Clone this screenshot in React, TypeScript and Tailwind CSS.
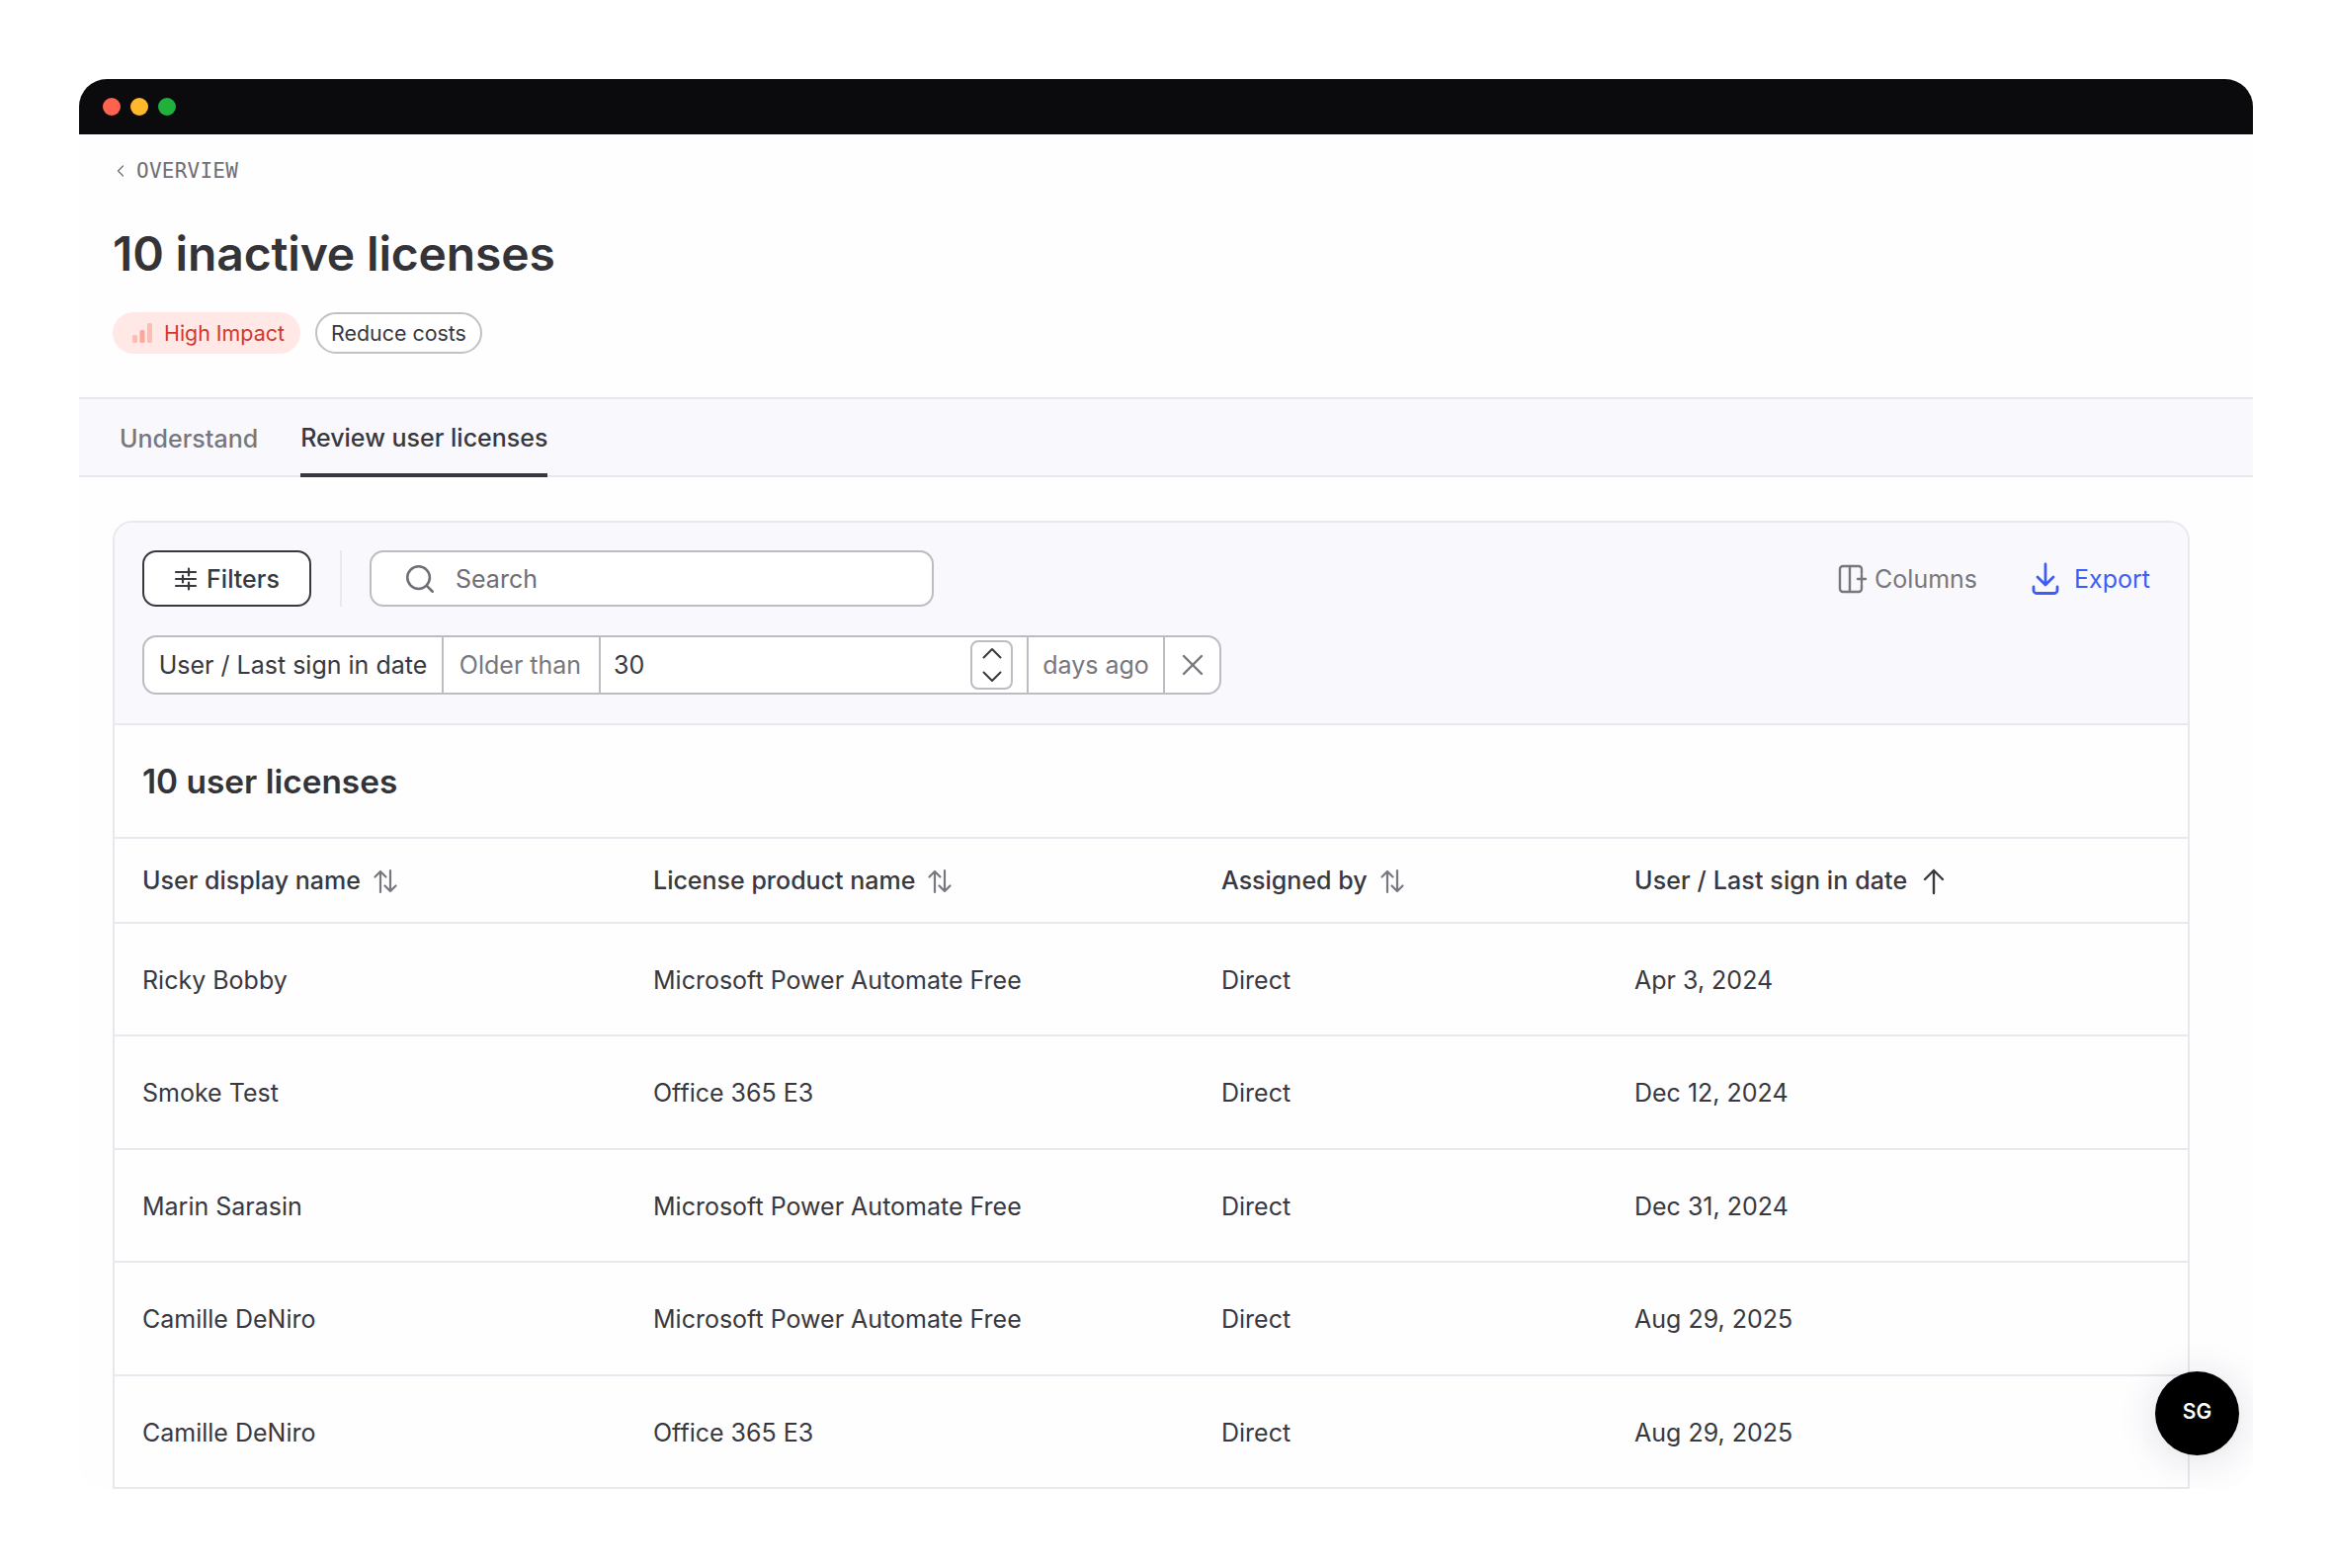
import { ChevronLeft, Search, X } from "lucide-react"

const rows = [
  { id: 1, name: "Ricky Bobby", product: "Microsoft Power Automate Free", assigned: "Direct", date: "Apr 3, 2024" },
  { id: 2, name: "Smoke Test", product: "Office 365 E3", assigned: "Direct", date: "Dec 12, 2024" },
  { id: 3, name: "Marin Sarasin", product: "Microsoft Power Automate Free", assigned: "Direct", date: "Dec 31, 2024" },
  { id: 4, name: "Camille DeNiro", product: "Microsoft Power Automate Free", assigned: "Direct", date: "Aug 29, 2025" },
  { id: 5, name: "Camille DeNiro", product: "Office 365 E3", assigned: "Direct", date: "Aug 29, 2025" },
]

const gridCols = "grid grid-cols-[517px_575px_418px_1fr] pl-[28px]"

function SortIcon() {
  return (
    <svg width="28" height="28" viewBox="0 0 28 28" fill="none" stroke="#77777d" strokeWidth="2.2" strokeLinecap="round" strokeLinejoin="round">
      <path d="M9 25V4M3.500 9.500 9 4l5.500 5.500" />
      <path d="M19 3v21M13.500 18.500 19 24l5.500-5.500" />
    </svg>
  )
}

function ArrowUpIcon() {
  return (
    <svg width="26" height="28" viewBox="0 0 26 28" fill="none" stroke="#38383e" strokeWidth="2.4" strokeLinecap="round" strokeLinejoin="round">
      <path d="M13 26V3M4 12l9-9 9 9" />
    </svg>
  )
}

function FilterIcon() {
  return (
    <svg width="24" height="24" viewBox="0 0 24 24" fill="none" stroke="#38383e" strokeWidth="2.2" strokeLinecap="round">
      <path d="M2 5h20M2 12h20M2 19h20" />
      <path d="M15 1.500v7M9 8.500v7M15 15.500v7" />
    </svg>
  )
}

function ColumnsIcon() {
  return (
    <svg width="30" height="30" viewBox="0 0 30 30" fill="none" stroke="#77777d" strokeWidth="2.400" strokeLinecap="round">
      <path d="M24 9V5a3 3 0 0 0-3-3H5a3 3 0 0 0-3 3v20a3 3 0 0 0 3 3h16a3 3 0 0 0 3-3v-4" />
      <path d="M12 2v26" />
      <path d="M24 11v8M20 15h8" />
    </svg>
  )
}

function ExportIcon() {
  return (
    <svg width="28" height="34" viewBox="0 0 28 34" fill="none" stroke="#3f5cf5" strokeWidth="2.800" strokeLinecap="round" strokeLinejoin="round">
      <path d="M14 2v21M6 15l8 8 8-8" />
      <path d="M2 25v3.500a3 3 0 0 0 3 3h18a3 3 0 0 0 3-3V25" />
    </svg>
  )
}

function ImpactIcon() {
  return (
    <svg width="20" height="20" viewBox="0 0 20 20">
      <rect x="0" y="12" width="5" height="8" rx="1.500" fill="#fdbcb4" />
      <rect x="7.500" y="7" width="5" height="13" rx="1.500" fill="#fba79c" />
      <rect x="15" y="0" width="5" height="20" rx="1.500" fill="#fdbcb4" />
    </svg>
  )
}

function StepUp() {
  return (
    <svg width="20" height="12" viewBox="0 0 20 12" fill="none" stroke="#38383e" strokeWidth="2" strokeLinecap="round" strokeLinejoin="round">
      <path d="M1.500 10.500 10 2l8.500 8.500" />
    </svg>
  )
}

function StepDown() {
  return (
    <svg width="20" height="12" viewBox="0 0 20 12" fill="none" stroke="#38383e" strokeWidth="2" strokeLinecap="round" strokeLinejoin="round">
      <path d="M1.500 1.500 10 10l8.500-8.500" />
    </svg>
  )
}

export default function App() {
  return (
    <div className="min-h-[1587px] bg-white px-[80px] pt-[80px] pb-[80px] font-['Inter',sans-serif] text-[#38383e]">
      <div className="relative h-[1427px] overflow-hidden rounded-[28px] bg-[#fefeff]">
        {/* window bar */}
        <div className="flex h-[56px] items-center gap-[10px] bg-[#0b0a0d] pl-[24px]">
          <span className="h-[18px] w-[18px] rounded-full bg-[#ff6350]" />
          <span className="h-[18px] w-[18px] rounded-full bg-[#ffb72b]" />
          <span className="h-[18px] w-[18px] rounded-full bg-[#1fb13c]" />
        </div>

        {/* back link + heading */}
        <div className="flex items-center gap-[6px] pl-[32px] pt-[25px] font-['DejaVu_Sans_Mono',monospace] text-[21px] leading-[24px] tracking-[0.25px] text-[#6e6e74]">
          <ChevronLeft size={20} strokeWidth={1.5} />
          <span>OVERVIEW</span>
        </div>
        <h1 className="pl-[34px] pt-[43px] text-[48px] leading-[58px] font-semibold tracking-[-0.15px] text-[#333338]">10 inactive licenses</h1>
        <div className="flex gap-[15px] pl-[34px] pt-[30px]">
          <span className="flex h-[42px] w-[190px] items-center gap-[12px] rounded-full bg-[#ffe8e6] pl-[20px] text-[21.4px] text-[#d1392d]">
            <ImpactIcon />
            High Impact
          </span>
          <span className="flex h-[42px] w-[169px] items-center justify-center rounded-full border-2 border-[#c0c0c6] bg-white text-[21.4px] text-[#38383e]">
            Reduce costs
          </span>
        </div>

        {/* tabs */}
        <div className="mt-[44px] flex h-[81px] items-stretch gap-[43px] border-y-2 border-[#e8e8ee] bg-[#f9f9fd] pl-[41px] text-[25px] font-medium">
          <span className="flex items-center pt-[4px] text-[#77777d]">Understand</span>
          <span className="-mb-[2px] flex items-center border-b-[4px] border-[#38383e] pt-[4px] text-[#38383e]">Review user licenses</span>
        </div>

        {/* card */}
        <div className="ml-[34px] mr-[64px] mt-[44px] rounded-t-[20px] border-2 border-b-0 border-[#e8e8ee]">
          <div className="h-[205px] rounded-t-[18px] border-b-2 border-[#e8e8ee] bg-[#f9f9fd] pl-[28px] pr-[38px] pt-[28px]">
            <div className="flex h-[57px] items-center">
              <button className="flex h-[57px] w-[171px] items-center justify-center gap-[9px] rounded-[14px] border-2 border-[#38383e] bg-white text-[25px] font-medium">
                <FilterIcon />
                <span className="pt-[2px]">Filters</span>
              </button>
              <div className="ml-[29px] mr-[28px] h-[57px] w-[2px] bg-[#e8e8ee]" />
              <div className="flex h-[57px] w-[571px] items-center gap-[19px] rounded-[14px] border-2 border-[#bcbcc2] bg-white pl-[32px] text-[25px] text-[#6e6e74]">
                <Search size={34} strokeWidth={1.8} />
                <span className="pt-[2px]">Search</span>
              </div>
              <div className="ml-auto flex items-center gap-[55px] text-[25px]">
                <span className="flex items-center gap-[7px] text-[#77777d]">
                  <ColumnsIcon />
                  <span className="pt-[2px]">Columns</span>
                </span>
                <span className="flex items-center gap-[15px] text-[#3f5cf5]">
                  <ExportIcon />
                  <span className="pt-[2px]">Export</span>
                </span>
              </div>
            </div>

            {/* active filter */}
            <div className="mt-[29px] flex h-[60px] w-[1092px] items-stretch overflow-hidden rounded-[14px] border-2 border-[#bcbcc2] bg-white text-[25px]">
              <span className="flex w-[303px] items-center justify-center border-r-2 border-[#bcbcc2] pt-[2px]">User / Last sign in date</span>
              <span className="flex w-[159px] items-center justify-center border-r-2 border-[#bcbcc2] pr-[2px] pt-[2px] text-[#77777d]">Older than</span>
              <span className="flex w-[433px] items-center justify-between border-r-2 border-[#bcbcc2] pl-[13px] pr-[14px]">
                <span className="pt-[2px]">30</span>
                <span className="flex h-[50px] w-[43px] flex-col items-center justify-between rounded-[8px] border-2 border-[#bcbcc2] py-[5px]">
                  <StepUp />
                  <StepDown />
                </span>
              </span>
              <span className="flex w-[138px] items-center justify-center border-r-2 border-[#bcbcc2] pt-[2px] text-[#77777d]">days ago</span>
              <span className="flex flex-1 items-center justify-center text-[#77777d]">
                <X size={36} strokeWidth={1.6} />
              </span>
            </div>
          </div>

          <div className="flex h-[112.500px] items-center pl-[28px] pt-[1px] text-[33.400px] font-semibold text-[#333338]">10 user licenses</div>

          {/* table */}
          <div className={`${gridCols} h-[88px] items-center border-y-2 border-[#e8e8ee] pt-[2px] text-[25px] font-medium`}>
            <span className="flex items-center gap-[11px]">User display name <SortIcon /></span>
            <span className="flex items-center gap-[11px]">License product name <SortIcon /></span>
            <span className="flex items-center gap-[11px]">Assigned by <SortIcon /></span>
            <span className="flex items-center gap-[14px] tracking-[0.12px]">User / Last sign in date <ArrowUpIcon /></span>
          </div>
          {rows.map((row) => (
            <div key={row.id} className={`${gridCols} h-[114.500px] items-center border-b-2 border-[#e8e8ee] pt-[3px] text-[25px]`}>
              <span>{row.name}</span>
              <span>{row.product}</span>
              <span>{row.assigned}</span>
              <span>{row.date}</span>
            </div>
          ))}
        </div>

        {/* avatar */}
        <div className="absolute right-[14px] top-[1308px] flex h-[85px] w-[85px] items-center justify-center rounded-full bg-black pb-[3px] text-[21px] font-semibold text-white shadow-[0_4px_40px_rgba(30,20,60,0.14)]">
          SG
        </div>
      </div>
    </div>
  )
}
